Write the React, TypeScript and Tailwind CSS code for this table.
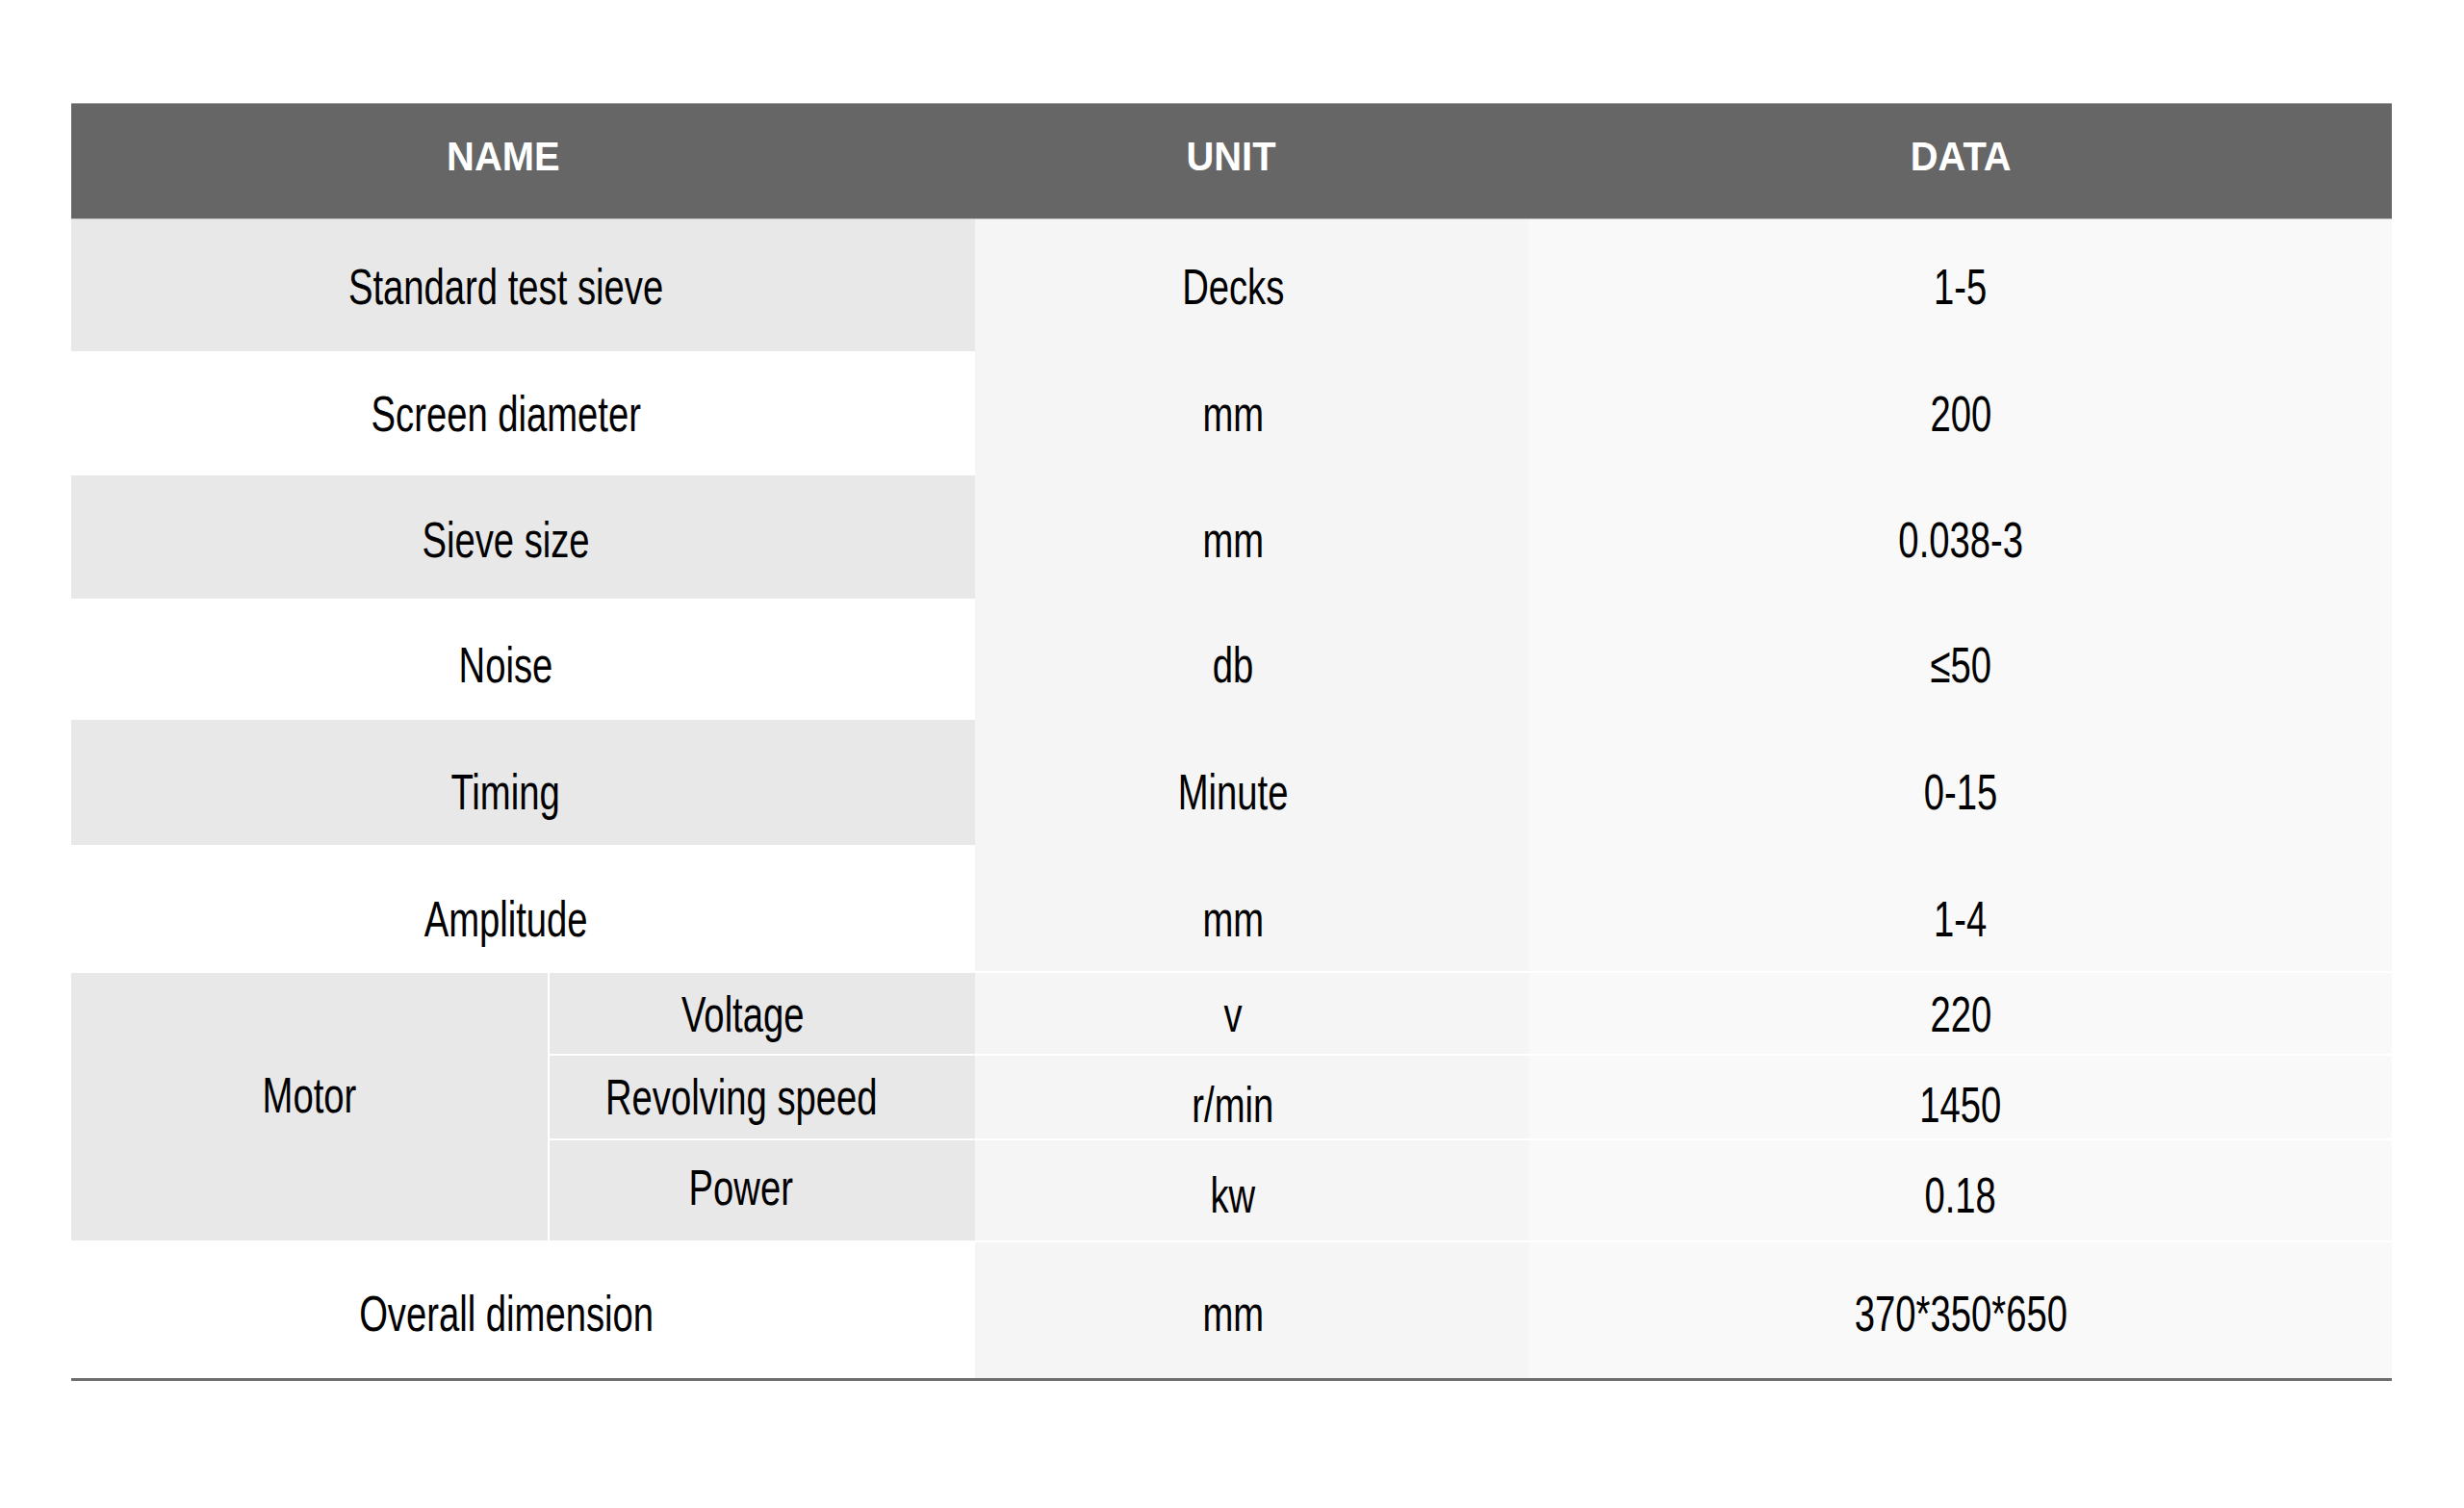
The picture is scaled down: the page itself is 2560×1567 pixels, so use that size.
import React from "react";

const T = ({ children, bold = false }: { children: React.ReactNode; bold?: boolean }) =>
  bold ? (
    <span className="inline-block whitespace-nowrap scale-x-[0.95] text-[42px] font-bold leading-none text-white">{children}</span>
  ) : (
    <span className="inline-block whitespace-nowrap scale-x-[0.735] text-[52px] leading-none text-black">{children}</span>
  );

const rows: { name: string; unit: string; data: string; h: string; pt: string; shade: boolean }[] = [
  { name: "Standard test sieve", unit: "Decks", data: "1-5", h: "h-[137px]", pt: "pt-[3px]", shade: true },
  { name: "Screen diameter", unit: "mm", data: "200", h: "h-[129px]", pt: "pt-0", shade: false },
  { name: "Sieve size", unit: "mm", data: "0.038-3", h: "h-[128px]", pt: "pt-[6px]", shade: true },
  { name: "Noise", unit: "db", data: "≤50", h: "h-[126px]", pt: "pt-[12px]", shade: false },
  { name: "Timing", unit: "Minute", data: "0-15", h: "h-[130px]", pt: "pt-[19px]", shade: true },
  { name: "Amplitude", unit: "mm", data: "1-4", h: "h-[131px]", pt: "pt-[22px]", shade: false },
];

export default function App() {
  return (
    <div
      className="w-[2560px] h-[1567px] bg-white pt-[107px] pl-[74px]"
      style={{ fontFamily: '"Liberation Sans", Arial, sans-serif' }}
    >
      <div className="w-[2411px] flex flex-col">
        {/* header */}
        <div className="flex h-[121px] bg-[#666666] border-t border-[#a0a0a0] border-b border-b-[#c8c8c8]">
          <div className="w-[939px] flex items-center justify-center pr-[42px] pb-[10px]">
            <T bold>NAME</T>
          </div>
          <div className="w-[576px] flex items-center justify-center pr-[44px] pb-[10px]">
            <T bold>UNIT</T>
          </div>
          <div className="flex-1 flex items-center justify-center pb-[10px]">
            <T bold>DATA</T>
          </div>
        </div>

        {rows.map((r) => (
          <div key={r.name} className={`flex ${r.h}`}>
            <div
              className={`w-[939px] flex items-center justify-center pr-[36px] ${r.pt} ${r.shade ? "bg-[#e8e8e8]" : "bg-white"}`}
            >
              <T>{r.name}</T>
            </div>
            <div className={`w-[576px] flex items-center justify-center pr-[40px] ${r.pt} bg-[#f5f5f5]`}>
              <T>{r.unit}</T>
            </div>
            <div className={`flex-1 flex items-center justify-center ${r.pt} bg-[#f9f9f9]`}>
              <T>{r.data}</T>
            </div>
          </div>
        ))}

        {/* motor block */}
        <div className="flex h-[280px] pt-[2px] bg-white">
          <div className="w-[495px] flex items-center justify-center bg-[#e8e8e8] pb-[24px]">
            <T>Motor</T>
          </div>
          <div className="flex-1 flex flex-col gap-[2px] pl-[2px]">
            <div className="flex h-[84px]">
              <div className="w-[442px] flex items-center justify-center pr-[40px] pt-[2px] bg-[#e8e8e8]">
                <T>Voltage</T>
              </div>
              <div className="w-[576px] flex items-center justify-center pr-[40px] pt-[2px] bg-[#f5f5f5]">
                <T>v</T>
              </div>
              <div className="flex-1 flex items-center justify-center pt-[2px] bg-[#f9f9f9]">
                <T>220</T>
              </div>
            </div>
            <div className="flex h-[86px]">
              <div className="w-[442px] flex items-center justify-center pr-[44px] bg-[#e8e8e8]">
                <T>Revolving speed</T>
              </div>
              <div className="w-[576px] flex items-center justify-center pr-[40px] pt-[16px] bg-[#f5f5f5]">
                <T>r/min</T>
              </div>
              <div className="flex-1 flex items-center justify-center pt-[16px] bg-[#f9f9f9]">
                <T>1450</T>
              </div>
            </div>
            <div className="flex flex-1">
              <div className="w-[442px] flex items-center justify-center pr-[44px] pb-[6px] bg-[#e8e8e8]">
                <T>Power</T>
              </div>
              <div className="w-[576px] flex items-center justify-center pr-[40px] pt-[10px] bg-[#f5f5f5]">
                <T>kw</T>
              </div>
              <div className="flex-1 flex items-center justify-center pt-[10px] bg-[#f9f9f9]">
                <T>0.18</T>
              </div>
            </div>
          </div>
        </div>

        {/* overall dimension */}
        <div className="flex h-[146px] pt-[2px] bg-white border-b-[3px] border-[#6e6e6e]">
          <div className="w-[939px] flex items-center justify-center pr-[34px] pt-[6px] bg-white">
            <T>Overall dimension</T>
          </div>
          <div className="w-[576px] flex items-center justify-center pr-[40px] pt-[6px] bg-[#f5f5f5]">
            <T>mm</T>
          </div>
          <div className="flex-1 flex items-center justify-center pt-[6px] bg-[#f9f9f9]">
            <T>370*350*650</T>
          </div>
        </div>
      </div>
    </div>
  );
}
